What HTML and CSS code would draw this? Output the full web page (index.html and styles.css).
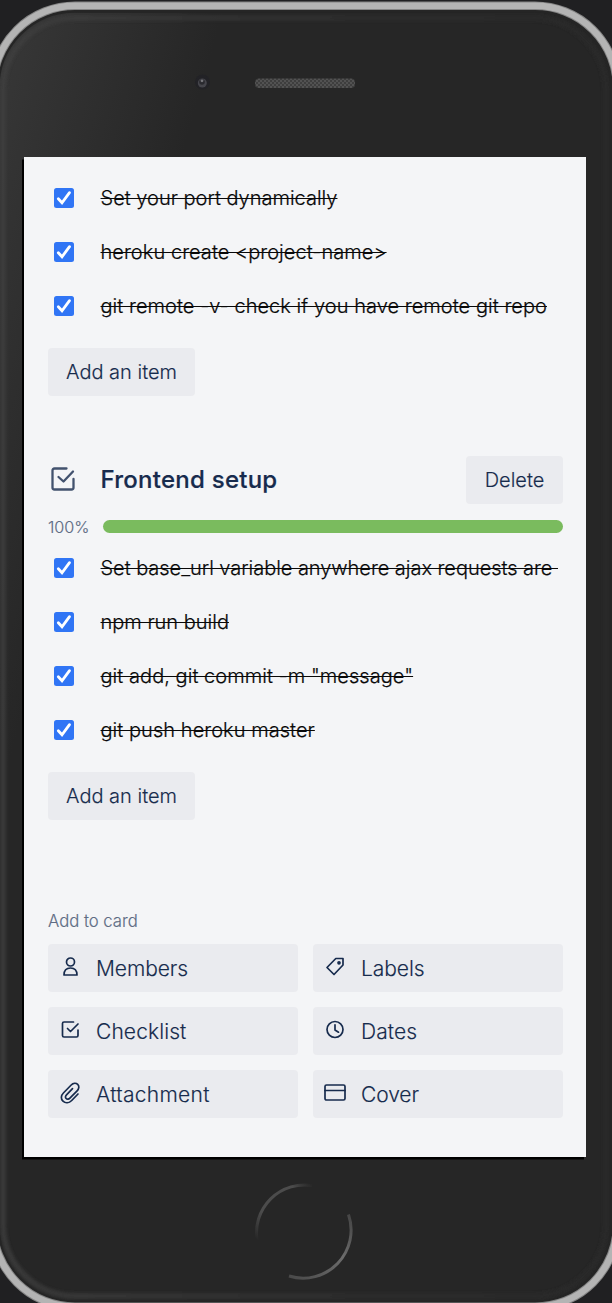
FILE: index.html
```
<!DOCTYPE html>
<html lang="en">
<head>
<meta charset="utf-8">
<title>Card checklist</title>
<link rel="stylesheet" href="styles.css">
</head>
<body>
<svg width="0" height="0" class="sprite" aria-hidden="true">
  <symbol id="tick" viewBox="0 0 20 20"><rect width="20" height="20" rx="2.5" fill="#3075f5"/><path d="M4.3 10.8 8 14.8 15.5 4.7" fill="none" stroke="#fff" stroke-width="2.8" stroke-linecap="round"/></symbol>
  <symbol id="checklist" viewBox="0 0 24 24"><path d="M15.500 1.500H3.500Q1.500 1.500 1.500 3.500v17q0 2 2 2h17q2 0 2-2V12M7.500 10l5 4.500 9.500-10" fill="none" stroke="currentColor" stroke-width="2.3" stroke-linecap="round" stroke-linejoin="round"/></symbol>
</svg>
<div class="phone">
  <svg class="phone-body" width="612" height="1303" viewBox="0 0 612 1303" aria-hidden="true">
    <defs>
      <linearGradient id="shell" gradientUnits="userSpaceOnUse" x1="0" y1="0" x2="210" y2="60"><stop offset="0" stop-color="#383838"/><stop offset="1" stop-color="#262626"/></linearGradient>
      <linearGradient id="fade" x1="0" y1="0" x2="0" y2="1"><stop offset=".5" stop-color="#262626" stop-opacity="0"/><stop offset=".9" stop-color="#262626"/></linearGradient>
      <linearGradient id="edge" x1="0" y1="0" x2="1" y2="0"><stop offset="0" stop-color="#404040"/><stop offset=".5" stop-color="#303030"/><stop offset="1" stop-color="#2a2a2a"/></linearGradient>
      <linearGradient id="arcA" gradientUnits="userSpaceOnUse" x1="257" y1="1240" x2="312" y2="1184"><stop offset="0" stop-color="#555" stop-opacity="0"/><stop offset=".3" stop-color="#4c4c4c"/><stop offset=".8" stop-color="#4c4c4c"/><stop offset="1" stop-color="#444" stop-opacity="0"/></linearGradient>
      <linearGradient id="arcB" gradientUnits="userSpaceOnUse" x1="350" y1="1212" x2="286" y2="1276"><stop offset="0" stop-color="#444"/><stop offset=".4" stop-color="#6c6c6c"/><stop offset="1" stop-color="#484848"/></linearGradient>
      <pattern id="mesh" width="4" height="4" patternUnits="userSpaceOnUse"><rect width="4" height="4" fill="#3e3e3e"/><path d="M0 0h2v2H0zM2 2h2v2H2z" fill="#525252"/></pattern>
      <filter id="soften" x="-5%" y="-5%" width="110%" height="110%"><feGaussianBlur stdDeviation="1.500"/></filter>
    </defs>
    <rect width="612" height="1303" fill="#202022"/>
    <rect x="-7" y="5.700" width="624" height="1301" rx="82" fill="url(#shell)"/>
    <rect x="-7" y="5.700" width="624" height="1301" rx="82" fill="url(#fade)"/>
    <rect x="3" y="18" width="603" height="1278" rx="72" fill="none" stroke="url(#edge)" stroke-width="6" opacity=".7" filter="url(#soften)"/>
    <rect x="-2" y="11.200" width="613.500" height="1291" rx="77" fill="none" stroke="#252525" stroke-width="3"/>
    <rect x="-7" y="5.700" width="624" height="1301" rx="82" fill="none" stroke="#858585" stroke-width="8.500"/>
    <rect x="-7" y="5.700" width="624" height="1301" rx="82" fill="none" stroke="#b4b4b4" stroke-width="6.500"/>
    <circle cx="202.500" cy="82" r="7.500" fill="#222226"/><circle cx="202.300" cy="83" r="4.500" fill="#45454b"/><circle cx="202" cy="82" r="2.800" fill="#29292e"/><circle cx="202" cy="80.800" r="1.400" fill="#77777c"/>
    <rect x="255" y="78.500" width="100" height="9.500" rx="4" fill="url(#mesh)"/>
    <g fill="none" stroke-width="3">
      <path d="M257 1240A48 48 0 0 1 312 1185.500" stroke="url(#arcA)"/>
      <path d="M348 1213A48 48 0 0 1 288.500 1274.500" stroke="url(#arcB)" transform="translate(.5 1.500)"/>
    </g>
  </svg>
  <main class="screen">
    <ul class="items">
      <li class="item"><svg class="tick"><use href="#tick"/></svg><span class="item-text">Set your port dynamically</span></li>
      <li class="item"><svg class="tick"><use href="#tick"/></svg><span class="item-text loose">heroku create &lt;project-name&gt;</span></li>
      <li class="item"><svg class="tick"><use href="#tick"/></svg><span class="item-text loose">git remote -v- check if you have remote git repo</span></li>
    </ul>
    <button class="button add">Add an item</button>
    <header class="heading">
      <svg class="heading-icon"><use href="#checklist"/></svg>
      <h2>Frontend setup</h2>
      <button class="button delete">Delete</button>
    </header>
    <div class="progress"><span class="percent">100%</span><div class="bar"></div></div>
    <ul class="items">
      <li class="item"><svg class="tick"><use href="#tick"/></svg><span class="item-text tight">Set base_url variable anywhere ajax requests are&nbsp;</span></li>
      <li class="item"><svg class="tick"><use href="#tick"/></svg><span class="item-text">npm run build</span></li>
      <li class="item"><svg class="tick"><use href="#tick"/></svg><span class="item-text loose">git add, git commit -m "message"</span></li>
      <li class="item"><svg class="tick"><use href="#tick"/></svg><span class="item-text loose">git push heroku master</span></li>
    </ul>
    <button class="button add">Add an item</button>
    <h3 class="section-label">Add to card</h3>
    <div class="actions">
      <button class="action"><svg class="icon" viewBox="0 0 24 24"><circle cx="12.500" cy="7" r="4"/><path d="M6 20q0-7 6.500-7T19 20z"/></svg>Members</button>
      <button class="action"><svg class="icon" viewBox="0 0 24 24"><path d="m4 12.500 8.800-9H20V10l-9 9.500z"/><circle cx="16" cy="7.800" r="1"/></svg>Labels</button>
      <button class="action wide"><svg class="icon" viewBox="0 0 24 24"><path d="M15.500 4H6Q4.500 4 4.500 5.500v12Q4.500 19 6 19h12.500q1.500 0 1.500-1.500V12M9.500 10.500l3 3L20 6"/></svg>Checklist</button>
      <button class="action wide"><svg class="icon" viewBox="0 0 24 24"><circle cx="12" cy="11.500" r="8"/><path d="M12 6.800v5.200l3.500 2.200"/></svg>Dates</button>
      <button class="action attachment"><svg class="icon" viewBox="0 0 24 24"><path d="m20 13-6.300 6.500c-2.700 2.700-6.300 3-8.700.7-2.300-2.200-2.200-5.600.4-8.200l7.800-8c2-2 4.800-2.200 6.500-.6 1.700 1.700 1.500 4.300-.6 6.400l-7.200 7.300c-1.200 1.200-2.800 1.400-3.800.4s-.8-2.500.4-3.700l6-6.200"/></svg>Attachment</button>
      <button class="action"><svg class="icon" viewBox="0 0 24 24"><rect x="2" y="4" width="20" height="15" rx="1.500"/><path d="M2 9.500h20"/></svg>Cover</button>
    </div>
  </main>
</div>
</body>
</html>
```
FILE: styles.css
```
* { box-sizing: border-box; }
body { margin: 0; background: #202022; font-family: Inter, "Liberation Sans", sans-serif; overflow: hidden; }
.sprite { position: absolute; }
.phone { position: relative; height: 1303px; padding: 157px 26px 146px 24px; }
.phone-body { position: absolute; inset: 0; }
.screen { position: relative; height: 1000px; padding: 14px 23px 0 24px; background: #f4f5f7; box-shadow: -2px 2.5px 0 #000; }
.items { list-style: none; margin: 0; padding: 0; }
.item { display: flex; align-items: center; height: 54px; padding-left: 6px; gap: 26.5px; white-space: nowrap; font-size: 20px; color: #080808; }
.tick { width: 20px; height: 20px; flex: none; }
.item-text { text-decoration: line-through; text-decoration-thickness: 1px; font-weight: 300; -webkit-text-stroke: 0.2px; }
.loose { letter-spacing: 0.05px; }
.tight { letter-spacing: -0.04px; }
.button { height: 48px; border: 0; border-radius: 4px; background: #eaebef; color: #172b4d; font: 300 20px Inter, sans-serif; padding: 0; display: block; white-space: nowrap; -webkit-text-stroke: 0.15px; }
.add { width: 147px; margin-top: 15px; }
.heading { display: flex; align-items: center; height: 48px; margin-top: 60px; color: #172b4d; }
.heading-icon { width: 24px; height: 24px; margin: 0 25.5px 3px 3px; color: #42526e; }
h2 { margin: 0 0 2px; font-size: 24px; font-weight: 500; letter-spacing: 0.25px; white-space: nowrap; -webkit-text-stroke: 0.2px; }
.delete { width: 97px; margin-left: auto; }
.progress { display: flex; align-items: center; height: 13px; margin: 16px 0 8px; }
.percent { width: 54.5px; font-size: 16.2px; font-weight: 300; color: #5e6c84; line-height: 13px; padding-top: 1px; -webkit-text-stroke: 0.15px; }
.bar { flex: 1; height: 12.5px; border-radius: 7px; background: #7abb5e; }
.section-label { margin: 89px 0 11px; height: 24px; line-height: 24px; font-size: 16.7px; font-weight: 300; color: #5e6c84; -webkit-text-stroke: 0.15px; }
.actions { display: grid; grid-template-columns: 250px 250px; column-gap: 15px; row-gap: 15px; }
.action { display: flex; align-items: center; height: 48px; padding: 0 0 0 10px; gap: 14px; border: 0; border-radius: 4px; background: #eaebef; color: #172b4d; font: 300 21px Inter, sans-serif; letter-spacing: -0.08px; -webkit-text-stroke: 0.15px; }
.wide { letter-spacing: 0.1px; }
.attachment { letter-spacing: 0.3px; }
.icon { width: 24px; height: 24px; flex: none; fill: none; stroke: currentColor; stroke-width: 1.7; stroke-linejoin: round; stroke-linecap: round; margin-bottom: 2px; }
```
